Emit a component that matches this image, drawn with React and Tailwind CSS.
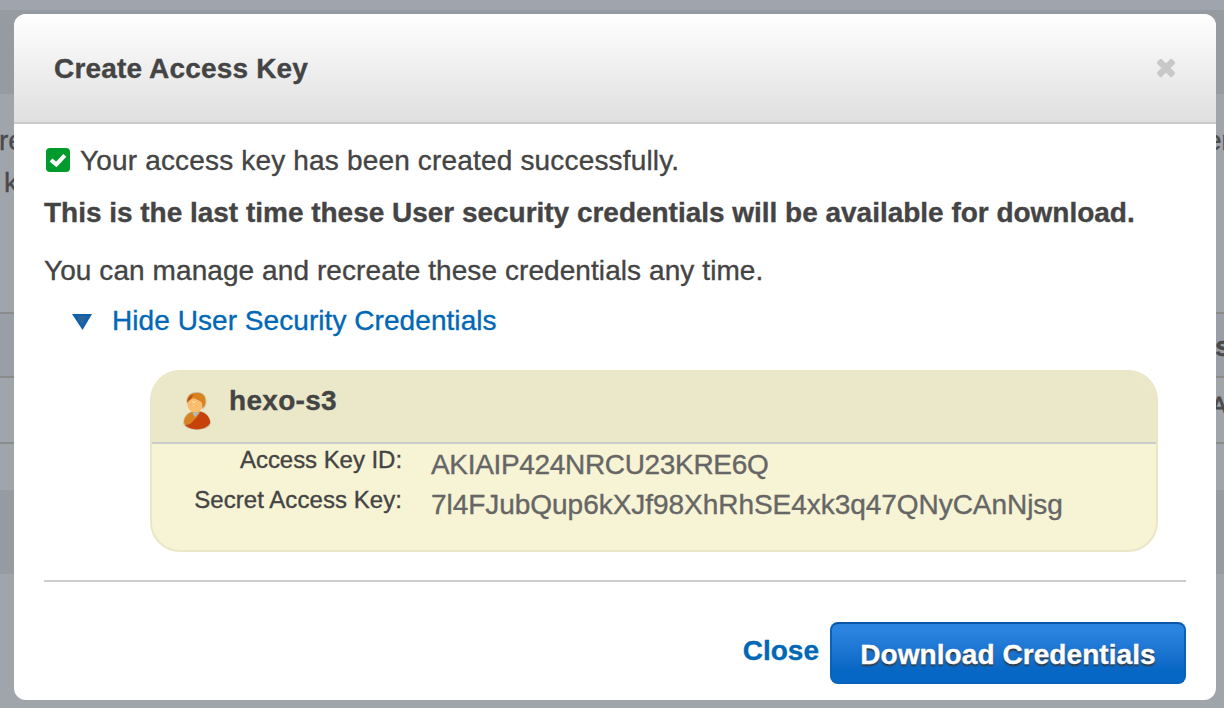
import React from "react";

function PageBehind() {
  return (
    <div className="flex h-full flex-col bg-[#a0a4ab] text-[28px] leading-[40px] text-[#484a4c]">
      <div className="h-[10px] bg-[#a0a4ad]" />
      <div className="h-[84px] bg-[#969aa1]" />
      <div className="flex h-[218px] justify-between overflow-hidden pt-[26px]">
        <div className="flex w-[40px] flex-col whitespace-nowrap">
          <span className="-ml-px leading-[42px]">re</span>
          <span className="pl-[4px] leading-[42px]">k</span>
        </div>
        <span className="w-[18px] whitespace-nowrap leading-[42px]">er</span>
      </div>
      <div className="flex h-[66px] items-center justify-end border-y-2 border-[#8a8b8b] bg-[#9a9ea6] pt-[3px] font-bold">
        <span className="w-[9px]">s</span>
      </div>
      <div className="flex h-[66px] justify-end overflow-hidden border-b-2 border-[#8a8b8b] pt-[8px] text-[24px] [-webkit-text-stroke:0.8px_currentColor]">
        <span className="w-[13px]">A</span>
      </div>
      <div className="h-[46px]" />
      <div className="h-[84px] bg-[#969aa1]" />
    </div>
  );
}

function SuccessIcon() {
  return (
    <svg className="size-6 shrink-0" viewBox="0 0 24 24">
      <rect width="24" height="24" rx="4" fill="#009a2d" />
      <path d="M5 12 10.300 16.400 18.800 7.400" fill="none" stroke="#fff" strokeWidth="4.200" />
    </svg>
  );
}

function UserIcon() {
  return (
    <svg className="h-[40px] w-[30px] shrink-0" viewBox="0 0 30 40">
      <path d="M1 32C1 24 8 19.500 14.500 19.500S28 24 29 32C28 37 21 39 15 39S2 37 1 32Z" fill="#c9c7b3" />
      <path d="M4 10C5 4 9 1 15 1S24.500 5 24.500 11C24.500 14 23 17 21.500 18L6 14Z" fill="#c9c7b3" />
      <path d="M2 31C2 25 8 20 14.500 20S27 24 28 31C27.500 35.500 21 38.300 15 38.300S2.500 35.500 2 31Z" fill="#d9821f" />
      <path d="M12 29C15 27 16 24 18 21C24 21.500 27.500 26 28.200 31C27.700 35.500 20 39 12 38C9 37.500 5 36.500 3 34C7 34 10 32 12 29Z" fill="#c6420d" />
      <path d="M10 21.500 13 26 18 21.500Z" fill="#aebbc0" />
      <path d="M5 10C5.500 4.500 9 1.800 15 1.800S23.500 5 23.500 10.500C23.500 13.500 22.500 15.500 21 16.500L6 13Z" fill="#d9821f" />
      <path d="M5.500 11C5.500 6.500 8 4 11.500 3.500L8.500 8.500Z" fill="#c0520f" />
      <path d="M5.500 12C7 9.500 8.500 8.500 10.500 7.500C13 6.700 15 9 17 9.500C19 10 20.500 12 20.300 14.500C20 18.500 18 21.500 13.500 21.500C8.500 21.500 5 17 5.500 12Z" fill="#f9bd6d" />
      <path d="m10 10 2 2 2-2m-3 4 1.500 1" fill="none" stroke="#ffe2b0" strokeWidth="1" />
    </svg>
  );
}

function CredentialRow({ label, value, labelClass, valueClass }) {
  return (
    <div className="flex h-10 whitespace-nowrap">
      <div className="flex w-[250px] justify-end text-[24px] leading-[32px] text-[#444]">
        <span className={labelClass}>{label}</span>
      </div>
      <span className={"ml-[29px] pt-px text-[28px] leading-[40px] text-[#666] " + valueClass}>{value}</span>
    </div>
  );
}

export default function App() {
  return (
    <div className="relative h-[708px] w-[1224px] overflow-hidden font-['Liberation_Sans',Arial,sans-serif] [-webkit-text-stroke:0.35px_currentColor]">
      <PageBehind />
      <div className="absolute inset-0 flex pt-[14px] pr-2 pb-2 pl-[14px]">
        <section className="flex flex-1 flex-col overflow-hidden rounded-[12px] bg-white text-[28px] leading-[40px] whitespace-nowrap text-[#444]">
          <header className="flex h-[110px] shrink-0 items-center justify-between border-b-2 border-[#ccc] bg-linear-to-b from-white to-[#dfdfdf] px-[40px]">
            <h1 className="pt-[2px] font-bold tracking-[0.17px]">Create Access Key</h1>
            <svg className="size-5" viewBox="0 0 20 20">
              <path d="M4.800 2.500 10 7.700 15.200 2.500 17.500 4.800 12.300 10 17.500 15.200 15.200 17.500 10 12.300 4.800 17.500 2.500 15.200 7.700 10 2.500 4.800Z" fill="#c8c8c8" stroke="#c8c8c8" strokeWidth="3.200" strokeLinejoin="round" />
            </svg>
          </header>
          <div className="flex flex-1 flex-col px-[30px]">
            <div className="mt-4 flex h-10 items-center gap-[10px] pl-[2px]">
              <SuccessIcon />
              <span className="pt-[2px] tracking-[0.17px]">Your access key has been created successfully.</span>
            </div>
            <p className="mt-3 h-10 pt-px font-bold tracking-[-0.02px]">This is the last time these User security credentials will be available for download.</p>
            <p className="mt-[18px] h-10 pt-px tracking-[0.08px]">You can manage and recreate these credentials any time.</p>
            <div className="mt-[10px] flex h-10 items-center gap-[20px] pl-[28px] text-[#0068b4]">
              <svg className="mt-[4px] h-4 w-5" viewBox="0 0 20 16">
                <path d="M0 0H20L10.500 16Z" fill="#1160ad" />
                <path d="M5 2H15L10 11Z" fill="#3d6890" opacity=".6" />
              </svg>
              <span className="pt-[2px] tracking-[0.06px]">Hide User Security Credentials</span>
            </div>
            <div className="mt-[30px] mr-[28px] ml-[106px] h-[182px] overflow-hidden rounded-[30px] border-2 border-[#eae7c9] bg-[#f7f3d5]">
              <div className="flex h-[72px] border-b-2 border-[#ccc] bg-[#ebe7c9] pl-[30px]">
                <div className="pt-[19px]"><UserIcon /></div>
                <h2 className="mt-[9px] ml-[17px] font-bold tracking-[0.3px]">hexo-s3</h2>
              </div>
              <CredentialRow label="Access Key ID:" value="AKIAIP424NRCU23KRE6Q" labelClass="tracking-[-0.05px]" valueClass="tracking-[-0.33px]" />
              <CredentialRow label="Secret Access Key:" value="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" labelClass="tracking-[0.06px]" valueClass="tracking-[-0.04px]" />
            </div>
            <footer className="mt-[28px] flex justify-end border-t-2 border-[#ccc] pt-[40px] font-bold">
              <a className="mt-[9px] mr-[11px] h-10 text-[#0068b4]">Close</a>
              <button className="flex h-[62px] w-[356px] items-center justify-center rounded-[8px] border-2 border-[#0a62bd] border-t-[#0b57a6] bg-linear-to-b from-[#2b84e0] from-10% to-[#0767c4] to-80% pt-[4px] tracking-[0.07px] text-white [text-shadow:0_2px_2px_#333]">
                Download Credentials
              </button>
            </footer>
          </div>
        </section>
      </div>
    </div>
  );
}
